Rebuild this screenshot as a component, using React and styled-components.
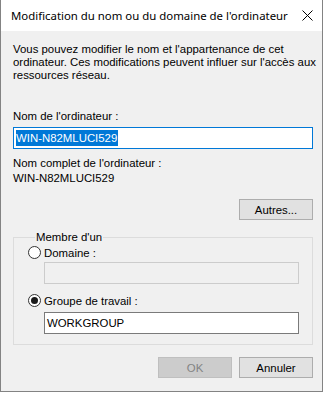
import styled, { createGlobalStyle } from "styled-components";

const GlobalStyle = createGlobalStyle`
html, body {
  margin: 0;
  padding: 0;
  background: #ffffff;
}
body {
  width: 326px;
  height: 394px;
  overflow: hidden;
}
`;

const Window = styled.div`
  width: 321px;
  height: 391px;
  border: 1px solid #838383;
  border-top: none;
  background: #f0f0f0;
  display: flex;
  flex-direction: column;
  font-family: "Liberation Sans", Arial, sans-serif;
  font-size: 11.4px;
  color: #000;
`;

const TitleBar = styled.div`
  height: 31px;
  background: #ffffff;
  display: flex;
  align-items: center;
  justify-content: space-between;
  padding: 0 9px 0 10px;
  flex-shrink: 0;
`;

const Title = styled.span`
  font-family: "Noto Sans", "Segoe UI", sans-serif;
  font-size: 11.4px;
  padding-bottom: 1px;
`;

const Body = styled.div`
  display: flex;
  flex-direction: column;
  padding: 12px 9px 0 12px;
`;

const Text = styled.div`
  line-height: 13px;
  margin-top: ${(p) => p.$top || 0}px;
  white-space: pre;
`;

const TextBox = styled.div`
  height: ${(p) => p.$h || 22}px;
  box-sizing: border-box;
  margin-top: ${(p) => p.$top || 0}px;
  margin-left: ${(p) => p.$left || 0}px;
  border: 1px solid ${(p) => (p.$focus ? "#0078d7" : p.$disabled ? "#cccccc" : "#7a7a7a")};
  background: ${(p) => (p.$disabled ? "#f0f0f0" : "#ffffff")};
  display: flex;
  align-items: center;
  padding-left: 2px;
  line-height: 16px;
`;

const Selected = styled.span`
  background: #0078d7;
  color: #ffffff;
  padding-right: 1px;
`;

const ButtonRow = styled.div`
  display: flex;
  justify-content: flex-end;
  gap: 7px;
  margin-top: ${(p) => p.$top || 0}px;
`;

const Button = styled.div`
  width: 74px;
  height: 21px;
  box-sizing: border-box;
  border: 1px solid ${(p) => (p.$disabled ? "#bfbfbf" : "#adadad")};
  background: ${(p) => (p.$disabled ? "#cccccc" : "#e1e1e1")};
  color: ${(p) => (p.$disabled ? "#838383" : "#000")};
  display: flex;
  align-items: center;
  justify-content: center;
`;

const Group = styled.fieldset`
  margin: 11px 0 0 0;
  padding: 0 13px 10px 14px;
  border: 1px solid #dcdcdc;
  min-width: 0;
`;

const Legend = styled.legend`
  padding: 0 1px;
  margin-left: 7px;
  line-height: 13px;
`;

const Radio = styled.div`
  display: flex;
  align-items: center;
  gap: 3px;
  height: 15px;
  margin-top: ${(p) => p.$top || 0}px;
`;

const Circle = styled.span`
  width: 13px;
  height: 13px;
  box-sizing: border-box;
  border-radius: 50%;
  border: 1px solid #333333;
  background: #ffffff;
  display: flex;
  align-items: center;
  justify-content: center;
  &::after {
    content: "";
    display: ${(p) => (p.$checked ? "block" : "none")};
    width: 7px;
    height: 7px;
    border-radius: 50%;
    background: #1a1a1a;
  }
`;

function Close() {
  return (
    <svg width="11" height="11" viewBox="0 0 11 11">
      <path d="M0.5 0.5 L10.5 10.5 M10.5 0.5 L0.5 10.5" stroke="#000" strokeWidth="1" fill="none" />
    </svg>
  );
}

export default function App() {
  return (
    <>
      <GlobalStyle />
      <Window>
        <TitleBar>
          <Title>Modification du nom ou du domaine de l'ordinateur</Title>
          <Close />
        </TitleBar>
        <Body>
          <Text>
            {"Vous pouvez modifier le nom et l'appartenance de cet\nordinateur. Ces modifications peuvent influer sur l'accès aux\nressources réseau."}
          </Text>
          <Text $top={28}>Nom de l'ordinateur :</Text>
          <TextBox $top={4} $focus>
            <Selected>WIN-N82MLUCI529</Selected>
          </TextBox>
          <Text $top={8}>Nom complet de l'ordinateur :</Text>
          <Text $top={2}>WIN-N82MLUCI529</Text>
          <ButtonRow $top={14}>
            <Button>Autres...</Button>
          </ButtonRow>
          <Group>
            <Legend>Membre d'un</Legend>
            <Radio $top={1}>
              <Circle />
              Domaine :
            </Radio>
            <TextBox $top={2} $left={16} $disabled />
            <Radio $top={9}>
              <Circle $checked />
              Groupe de travail :
            </Radio>
            <TextBox $top={4} $left={16} $h={22}>WORKGROUP</TextBox>
          </Group>
          <ButtonRow $top={12}>
            <Button $disabled>OK</Button>
            <Button>Annuler</Button>
          </ButtonRow>
        </Body>
      </Window>
    </>
  );
}
